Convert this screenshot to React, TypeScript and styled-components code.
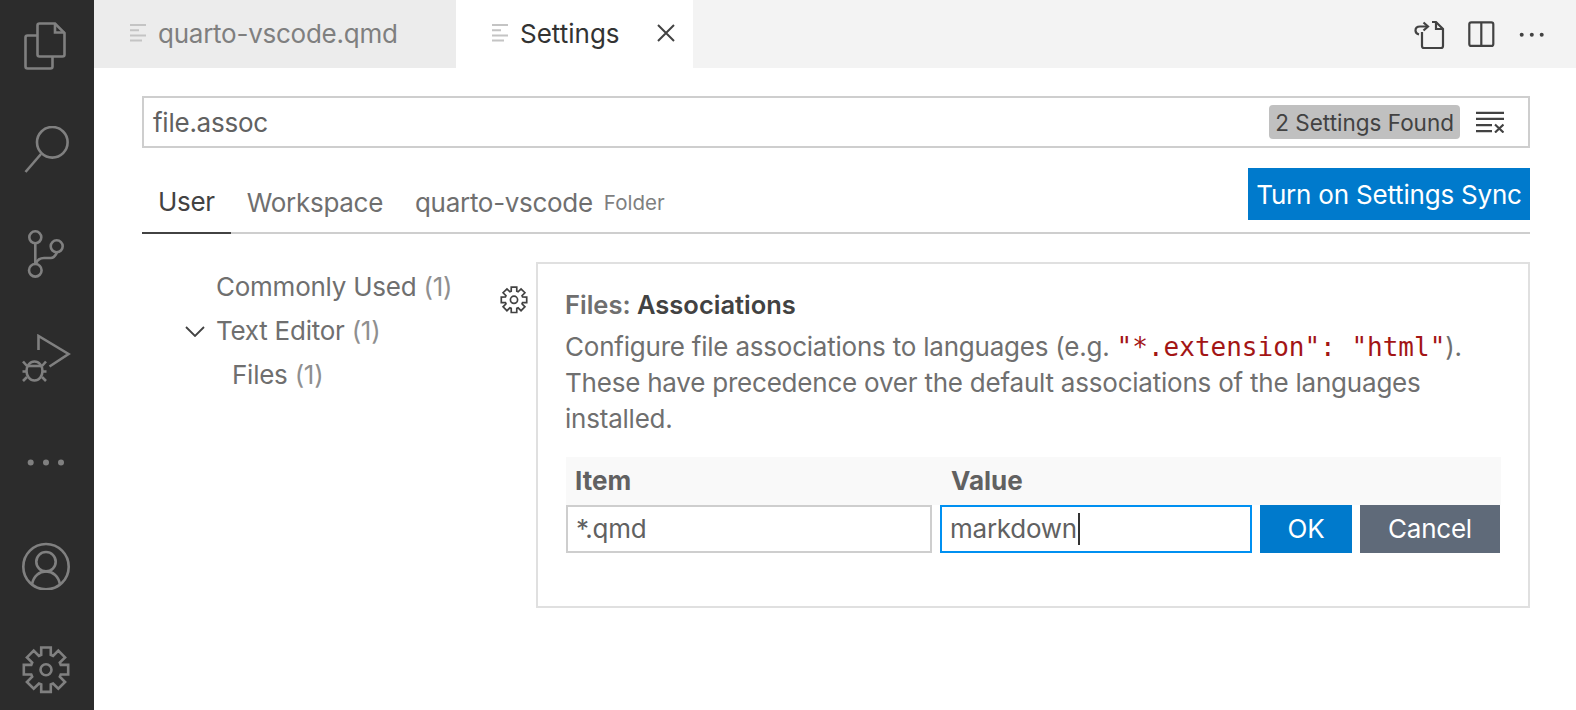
import styled, { createGlobalStyle } from "styled-components";

const GlobalStyle = createGlobalStyle`
  html, body {
    margin: 0;
    padding: 0;
    background: #fff;
    overflow: hidden;
  }
  * {
    box-sizing: border-box;
  }
`;

// draws a cog outline, flat tooth on top like the codicon one
const gearPath = (cx: number, cy: number, outer: number, inner: number) => {
  const teeth = 8;
  const step = (Math.PI * 2) / teeth;
  let d = "";
  for (let i = 0; i < teeth; i++) {
    const a = -Math.PI / 2 + i * step;
    const pts: [number, number][] = [
      [a - step * 0.4, inner],
      [a - step * 0.27, outer],
      [a + step * 0.27, outer],
      [a + step * 0.4, inner],
    ];
    pts.forEach(([ang, r], j) => {
      const x = (cx + Math.cos(ang) * r).toFixed(2);
      const y = (cy + Math.sin(ang) * r).toFixed(2);
      d += `${i === 0 && j === 0 ? "M" : "L"}${x} ${y} `;
    });
  }
  return d + "Z";
};

const App = () => {
  return (
    <>
      <GlobalStyle />
      <Page>
        <ActivityBar>
          <ActivityIcon viewBox="17 22 60 48">
            <path d="M39.5 23.5H55L64.5 33V54.5Q64.5 56.5 62.5 56.5H39.5Q37.5 56.5 37.5 54.5V25.5Q37.5 23.5 39.5 23.5Z" />
            <path d="M55 23.5V32.5H64.5" />
            <path d="M37.5 35.5H27.5Q25.5 35.5 25.5 37.5V66.5Q25.5 68.5 27.5 68.5H50.5Q52.5 68.5 52.5 66.5V56.5" />
          </ActivityIcon>
          <ActivityIcon viewBox="17 126 60 48">
            <circle cx="52.3" cy="142.3" r="15.3" />
            <path d="M41 154L25.5 172" />
          </ActivityIcon>
          <ActivityIcon viewBox="17 230 60 48">
            <circle cx="35.3" cy="237.3" r="6" />
            <circle cx="56.7" cy="246.3" r="6" />
            <circle cx="35.3" cy="270.3" r="6.3" />
            <path d="M35.3 243.5V264" />
            <path d="M36 263.5Q38 258 44 258H51Q54.5 258 57 252.3" />
          </ActivityIcon>
          <ActivityIcon viewBox="17 334 60 48">
            <path d="M38.5 350V336L68.5 354L49.5 366.5" />
            <ellipse cx="34.5" cy="371" rx="8" ry="9.5" />
            <path d="M27 366H42" />
            <path d="M27 366L23 361.5M42 366L46 361.5M22.5 371.5H26.5M42.5 371.5H46.5M27 377L23 381M42 377L46 381" />
          </ActivityIcon>
          <ActivityIcon viewBox="17 437 60 48" $filled>
            <circle cx="30.7" cy="461.5" r="3" />
            <circle cx="46" cy="461.5" r="3" />
            <circle cx="61" cy="461.5" r="3" />
          </ActivityIcon>
          <ActivityIcon viewBox="17 541 60 48">
            <circle cx="46" cy="565.7" r="22.7" />
            <circle cx="46" cy="560.7" r="9.7" />
            <path d="M32 583.5C33.5 575 39.5 570.4 46 570.4C52.5 570.4 58.5 575 60 583.5" />
          </ActivityIcon>
          <ActivityIcon viewBox="17 646 60 48">
            <path d={gearPath(46, 669.7, 22.7, 15.5)} />
            <circle cx="46" cy="669.7" r="5.5" />
          </ActivityIcon>
        </ActivityBar>

        <Main>
          <TabBar>
            <Tab $width={362}>
              <TabFileIcon viewBox="0 0 18 20">
                <path d="M1 2H17M1 7.2H10M1 12.4H17M1 17.6H13" />
              </TabFileIcon>
              <TabLabel>quarto-vscode.qmd</TabLabel>
            </Tab>
            <Tab $width={237} $active>
              <TabFileIcon viewBox="0 0 18 20">
                <path d="M1 2H17M1 7.2H10M1 12.4H17M1 17.6H13" />
              </TabFileIcon>
              <TabLabel $active>Settings</TabLabel>
              <CloseIcon viewBox="0 0 18 18">
                <path d="M1 1L17 17M17 1L1 17" />
              </CloseIcon>
            </Tab>
            <TabActions>
              <ActionIcon viewBox="1410 16 36 34" $width={36}>
                <path d="M1432 21H1436L1443 28V45Q1443 47 1441 47H1424Q1422 47 1422 45V31" />
                <path d="M1436 21V28H1443" />
                <path d="M1427 25.5H1420Q1415.5 25.5 1415.5 29.5Q1415.5 32.5 1419 33.5" />
                <path d="M1423.5 21.5L1428 25.5L1423.5 29.5" />
              </ActionIcon>
              <ActionIcon viewBox="1466 16 32 34" $width={32}>
                <rect x="1469.3" y="21.3" width="24" height="23.6" rx="2" />
                <path d="M1481.3 21V45" />
              </ActionIcon>
              <ActionIcon viewBox="1518 16 28 34" $width={28} $filled>
                <circle cx="1521.7" cy="33.7" r="2" />
                <circle cx="1531.8" cy="33.7" r="2" />
                <circle cx="1541.7" cy="33.7" r="2" />
              </ActionIcon>
            </TabActions>
          </TabBar>

          <Content>
            <SearchBox>
              <SearchText>file.assoc</SearchText>
              <FoundBadge>2 Settings Found</FoundBadge>
              <ClearIcon viewBox="1476 111 28 22">
                <path d="M1476 112.8H1504M1476 118.9H1504M1476 125.2H1492M1476 131.2H1492" />
                <path d="M1495 124.5L1503.5 132.5M1503.5 124.5L1495 132.5" />
              </ClearIcon>
            </SearchBox>

            <HeaderRow>
              <ScopeTab $active>User</ScopeTab>
              <ScopeTab>Workspace</ScopeTab>
              <ScopeTab>
                quarto-vscode<FolderLabel>Folder</FolderLabel>
              </ScopeTab>
              <SyncButton>Turn on Settings Sync</SyncButton>
            </HeaderRow>

            <Body>
              <Tree>
                <TreeRow>
                  Commonly Used <Count>(1)</Count>
                </TreeRow>
                <TreeRow>
                  <Chevron viewBox="0 0 20 11">
                    <path d="M1 1L10 10L19 1" />
                  </Chevron>
                  Text Editor <Count>(1)</Count>
                </TreeRow>
                <TreeRow $nested>
                  Files <Count>(1)</Count>
                </TreeRow>
              </Tree>
              <RowGear viewBox="500 286 28 28">
                <path d={gearPath(514, 299.8, 13, 9)} />
                <circle cx="514" cy="299.8" r="3.6" />
              </RowGear>
              <Card>
                <Title>
                  Files: <strong>Associations</strong>
                </Title>
                <Description>
                  Configure file associations to languages (e.g.{" "}
                  <Code>"*.extension": "html"</Code>).
                  <br />
                  These have precedence over the default associations of the
                  languages
                  <br />
                  installed.
                </Description>
                <Table>
                  <TableHead>
                    <HeadCell>Item</HeadCell>
                    <HeadCell $indent={11}>Value</HeadCell>
                  </TableHead>
                  <TableRow>
                    <Field>*.qmd</Field>
                    <Field $focused>
                      markdown
                      <Caret />
                    </Field>
                    <RowButton $color="#007acc">OK</RowButton>
                    <RowButton $color="#5f6a79">Cancel</RowButton>
                  </TableRow>
                </Table>
              </Card>
            </Body>
          </Content>
        </Main>
      </Page>
    </>
  );
};

const font = `Inter, "Liberation Sans", sans-serif`;

const Page = styled.div`
  display: flex;
  width: 1576px;
  height: 710px;
  font-family: ${font};
  letter-spacing: -0.25px;
  background: #fff;
`;

const ActivityBar = styled.div`
  flex: 0 0 94px;
  display: flex;
  flex-direction: column;
  align-items: center;
  gap: 56px;
  padding-top: 22px;
  background: #2c2c2c;
  overflow: hidden;
`;

const ActivityIcon = styled.svg<{ $filled?: boolean }>`
  flex: none;
  width: 60px;
  height: 48px;
  fill: ${(props) => (props.$filled ? "#808080" : "none")};
  stroke: ${(props) => (props.$filled ? "none" : "#808080")};
  stroke-width: 2.6;
`;

const Main = styled.div`
  flex: 1;
  display: flex;
  flex-direction: column;
  min-width: 0;
`;

const TabBar = styled.div`
  display: flex;
  align-items: stretch;
  height: 68px;
  background: #f3f3f3;
`;

const Tab = styled.div<{ $width: number; $active?: boolean }>`
  display: flex;
  align-items: center;
  width: ${(props) => props.$width}px;
  padding: 0 0 2px 35px;
  background: ${(props) => (props.$active ? "#fff" : "#ececec")};
`;

const TabFileIcon = styled.svg`
  width: 18px;
  height: 20px;
  fill: none;
  stroke: #c4c4c4;
  stroke-width: 2;
`;

const TabLabel = styled.span<{ $active?: boolean }>`
  margin-left: 11px;
  font-size: 26px;
  letter-spacing: ${(props) => (props.$active ? "0" : "-0.25px")};
  color: ${(props) => (props.$active ? "#333" : "#7f7f7f")};
`;

const CloseIcon = styled.svg`
  width: 18px;
  height: 18px;
  margin-left: 37px;
  fill: none;
  stroke: #424242;
  stroke-width: 2;
`;

const TabActions = styled.div`
  flex: 1;
  display: flex;
  justify-content: flex-end;
  align-items: center;
  gap: 20px;
  padding-right: 30px;
`;

const ActionIcon = styled.svg<{ $width: number; $filled?: boolean }>`
  width: ${(props) => props.$width}px;
  height: 34px;
  fill: ${(props) => (props.$filled ? "#424242" : "none")};
  stroke: ${(props) => (props.$filled ? "none" : "#424242")};
  stroke-width: 2.2;
  overflow: visible;
`;

const Content = styled.div`
  flex: 1;
  padding: 28px 46px 0 48px;
`;

const SearchBox = styled.div`
  display: flex;
  align-items: center;
  height: 52px;
  padding: 0 24px 0 9px;
  border: 2px solid #cecece;
`;

const SearchText = styled.span`
  flex: 1;
  font-size: 26px;
  color: #616161;
`;

const FoundBadge = styled.span`
  display: flex;
  align-items: center;
  height: 34px;
  padding: 0 6px;
  border-radius: 4px;
  background: #c0c0c0;
  font-size: 22.5px;
  letter-spacing: 0;
  color: #424242;
`;

const ClearIcon = styled.svg`
  width: 28px;
  height: 22px;
  margin-left: 16px;
  fill: none;
  stroke: #424242;
  stroke-width: 2.2;
`;

const HeaderRow = styled.div`
  display: flex;
  align-items: flex-end;
  height: 66px;
  margin-top: 20px;
  border-bottom: 2px solid #cecece;
`;

const ScopeTab = styled.div<{ $active?: boolean }>`
  display: flex;
  align-items: flex-start;
  height: 49px;
  margin-bottom: -2px;
  padding: ${(props) => (props.$active ? "0 16px" : "1px 16px 0")};
  border-bottom: 2px solid ${(props) => (props.$active ? "#424242" : "transparent")};
  font-size: 26px;
  line-height: 34px;
  letter-spacing: -0.3px;
  color: ${(props) => (props.$active ? "#424242" : "#6f6f6f")};
`;

const FolderLabel = styled.span`
  margin-left: 11px;
  font-size: 20.5px;
  letter-spacing: 0;
  color: #7f7f7f;
`;

const SyncButton = styled.button`
  align-self: flex-start;
  margin-left: auto;
  width: 282px;
  height: 52px;
  padding: 0;
  border: none;
  background: #007acc;
  color: #fff;
  font-family: ${font};
  font-size: 26px;
  letter-spacing: -0.2px;
`;

const Body = styled.div`
  display: flex;
  align-items: flex-start;
  margin-top: 28px;
`;

const Tree = styled.div`
  flex: 0 0 358px;
  padding-top: 3px;
`;

const TreeRow = styled.div<{ $nested?: boolean }>`
  position: relative;
  height: 44px;
  padding-left: ${(props) => (props.$nested ? 90 : 74)}px;
  font-size: 26px;
  line-height: 44px;
  color: #6f6f6f;
`;

const Count = styled.span`
  color: #8f8f8f;
`;

// sits over the row's left padding, like the twistie in the real tree
const Chevron = styled.svg`
  position: absolute;
  left: 43px;
  top: 17px;
  width: 20px;
  height: 11px;
  fill: none;
  stroke: #424242;
  stroke-width: 1.8;
`;

const RowGear = styled.svg`
  flex: none;
  width: 28px;
  height: 28px;
  margin: 24px 8px 0 0;
  fill: none;
  stroke: #424242;
  stroke-width: 1.7;
`;

const Card = styled.div`
  flex: 1;
  padding: 23px 28px 53px 27px;
  border: 2px solid #e0e0e0;
  font-size: 26px;
  line-height: 36px;
  color: #6f6f6f;
`;

const Title = styled.div`
  font-size: 25.5px;
  font-weight: 600;
  letter-spacing: 0;
  color: #6f6f6f;

  strong {
    font-weight: 600;
    color: #424242;
  }
`;

const Description = styled.div`
  margin-top: 6px;
  white-space: nowrap;
  letter-spacing: -0.22px;
`;

const Code = styled.code`
  font-family: "DejaVu Sans Mono", "Liberation Mono", monospace;
  font-size: 26px;
  letter-spacing: 0;
  color: #a31515;
`;

const Table = styled.div`
  margin: 20px -1px 0 1px;
`;

const columns = "366px 312px 92px 140px";

const TableHead = styled.div`
  display: grid;
  grid-template-columns: ${columns};
  column-gap: 8px;
  align-items: center;
  height: 48px;
  background: #f9f9f9;
`;

const HeadCell = styled.div<{ $indent?: number }>`
  padding-left: ${(props) => props.$indent ?? 9}px;
  font-size: 26px;
  font-weight: 700;
  letter-spacing: 0;
  color: #616161;
`;

const TableRow = styled.div`
  display: grid;
  grid-template-columns: ${columns};
  column-gap: 8px;
  height: 48px;
`;

const Field = styled.div<{ $focused?: boolean }>`
  display: flex;
  align-items: center;
  padding-left: 8px;
  border: 2px solid ${(props) => (props.$focused ? "#0090f1" : "#cecece")};
  font-size: 26px;
  color: #616161;
`;

const Caret = styled.span`
  width: 2px;
  height: 32px;
  margin-left: 1px;
  background: #333;
`;

const RowButton = styled.button<{ $color: string }>`
  padding: 0 0 2px;
  border: none;
  background: ${(props) => props.$color};
  color: #fff;
  font-family: ${font};
  font-size: 26px;
  letter-spacing: -0.25px;
`;

export default App;
